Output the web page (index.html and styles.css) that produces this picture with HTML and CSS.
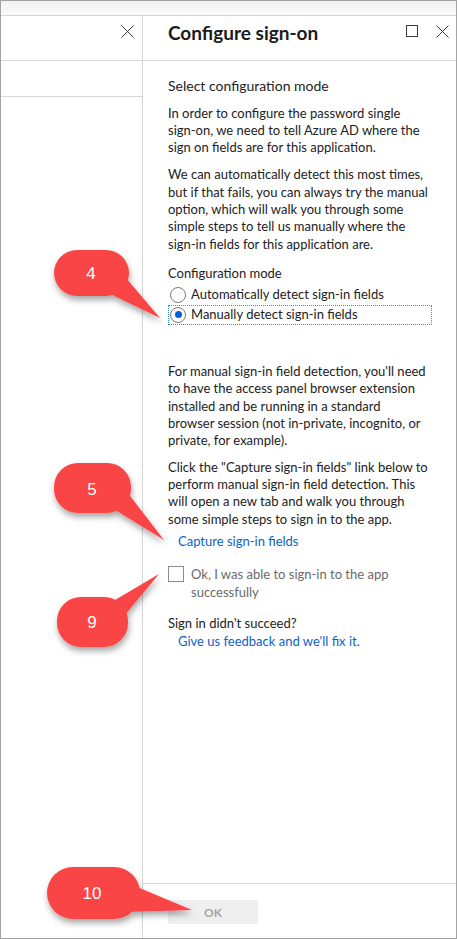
FILE: index.html
```html
<!DOCTYPE html>
<html lang="en">
<head>
<meta charset="utf-8">
<title>Configure sign-on</title>
<link rel="stylesheet" href="styles.css">
</head>
<body>
<div class="frame">
  <div class="topstrip"></div>
  <div class="panes">
    <div class="left">
      <div class="left-head">
        <svg class="icon-x" width="13" height="13" viewBox="0 0 13 13"><path d="M0.5 0.5 L12.5 12.5 M12.5 0.5 L0.5 12.5" /></svg>
      </div>
      <div class="left-row"></div>
    </div>
    <div class="right">
      <div class="blade-head">
        <h1 class="title">Configure sign-on</h1>
        <div class="head-actions">
          <svg class="icon-max" width="12" height="12" viewBox="0 0 12 12"><rect x="0.5" y="0.5" width="11" height="11" /></svg>
          <svg class="icon-x" width="13" height="13" viewBox="0 0 13 13"><path d="M0.5 0.5 L12.5 12.5 M12.5 0.5 L0.5 12.5" /></svg>
        </div>
      </div>
      <div class="blade-body">
        <h2 class="section-title">Select configuration mode</h2>
        <p class="para p1">In order to configure the password single sign-on, we need to tell Azure AD where the sign on fields are for this application.</p>
        <p class="para p2">We can automatically detect this most times, but if that fails, you can always try the manual option, which will walk you through some simple steps to tell us manually where the sign-in fields for this application are.</p>
        <div class="field-label">Configuration mode</div>
        <div class="radio-group">
          <label class="radio"><span class="radio-circle"></span><span>Automatically detect sign-in fields</span></label>
          <label class="radio focused"><span class="radio-circle checked"></span><span>Manually detect sign-in fields</span></label>
        </div>
        <p class="para p3">For manual sign-in field detection, you'll need to have the access panel browser extension installed and be running in a standard browser session (not in-private, incognito, or private, for example).</p>
        <p class="para p4">Click the "Capture sign-in fields" link below to perform manual sign-in field detection. This will open a new tab and walk you through some simple steps to sign in to the app.</p>
        <a class="link capture" href="#">Capture sign-in fields</a>
        <div class="check">
          <span class="check-box"></span>
          <span class="check-text">Ok, I was able to sign-in to the app successfully</span>
        </div>
        <div class="para signin">Sign in didn't succeed?</div>
        <a class="link feedback" href="#">Give us feedback and we'll fix it.</a>
      </div>
      <div class="blade-foot">
        <button class="ok" type="button">OK</button>
      </div>
    </div>
  </div>

  <svg class="callouts" width="457" height="939" viewBox="0 0 457 939">
    <defs>
      <filter id="shadow" x="-30%" y="-30%" width="170%" height="180%">
        <feDropShadow dx="1" dy="4" stdDeviation="3" flood-color="#000" flood-opacity="0.35"/>
      </filter>
    </defs>
    <g class="bubble" filter="url(#shadow)">
      <rect x="54" y="250" width="75" height="46" rx="23" ry="23"/>
      <polygon points="106,292 126,278 160,318"/>
    </g>
    <text class="bubble-num" x="91" y="273">4</text>

    <g class="bubble" filter="url(#shadow)">
      <rect x="54" y="463" width="77" height="50" rx="24" ry="24"/>
      <polygon points="112,508 127,492 164,540"/>
    </g>
    <text class="bubble-num" x="92" y="489">5</text>

    <g class="bubble" filter="url(#shadow)">
      <rect x="57" y="597" width="71" height="50" rx="24" ry="24"/>
      <polygon points="110,603 124,616 159,574"/>
    </g>
    <text class="bubble-num" x="92" y="622">9</text>

    <g class="bubble" filter="url(#shadow)">
      <rect x="47" y="867" width="93" height="52" rx="26" ry="26"/>
      <polygon points="130,884 126,912 192,910"/>
    </g>
    <text class="bubble-num" x="92" y="893">10</text>
  </svg>
</div>
</body>
</html>
```

FILE: styles.css
```css
* {
  box-sizing: border-box;
}

html,
body {
  margin: 0;
  padding: 0;
  background: #ffffff;
}

body {
  font-family: Lato, "Noto Sans", sans-serif;
  font-size: 13px;
  color: #222222;
}

.frame {
  position: relative;
  width: 457px;
  height: 939px;
  border: 1px solid #a3a3a3;
  display: flex;
  flex-direction: column;
  overflow: hidden;
}

.topstrip {
  flex: none;
  height: 15px;
  background: linear-gradient(#f1f1f1, #fbfbfb);
  border-bottom: 1px solid #d6d6d6;
}

.panes {
  flex: 1;
  display: flex;
  min-height: 0;
}

.left {
  flex: none;
  width: 142px;
  border-right: 1px solid #d6d6d6;
}

.left-head {
  height: 45px;
  border-bottom: 1px solid #d6d6d6;
  display: flex;
  justify-content: flex-end;
  align-items: flex-start;
  padding: 9px 8px 0 0;
}

.left-row {
  height: 36px;
  border-bottom: 1px solid #d6d6d6;
}

.icon-x path,
.icon-max rect {
  fill: none;
  stroke: #3a3a3a;
  stroke-width: 1;
}

.right {
  flex: 1;
  display: flex;
  flex-direction: column;
  min-width: 0;
}

.blade-head {
  flex: none;
  height: 45px;
  border-bottom: 1px solid #d6d6d6;
  display: flex;
  align-items: flex-start;
  padding: 0 7px 0 25px;
}

.title {
  margin: 0;
  padding-top: 5px;
  font-size: 19px;
  line-height: 24px;
  font-weight: 700;
  color: #1b1b1b;
}

.head-actions {
  margin-left: auto;
  display: flex;
  align-items: flex-start;
  gap: 18px;
  padding-top: 9px;
}

.blade-body {
  flex: 1;
  padding: 16px 24px 0 25px;
  line-height: 17.33px;
}

.section-title {
  margin: 0;
  font-size: 14px;
  font-weight: 400;
  line-height: 18px;
}

.para {
  margin: 0;
  max-width: 262px;
}

.p1 {
  margin-top: 9.5px;
}

.p2 {
  margin-top: 9.8px;
}

.field-label {
  margin-top: 11.6px;
}

.radio-group {
  margin-top: 3px;
  display: flex;
  flex-direction: column;
}

.radio {
  height: 20px;
  display: flex;
  align-items: center;
  gap: 5px;
  border: 1px dotted transparent;
  padding-left: 1px;
}

.radio.focused {
  border-color: #2f95d9;
}

.radio-circle {
  flex: none;
  width: 16px;
  height: 16px;
  border: 1px solid #7a7a7a;
  border-radius: 50%;
  display: flex;
  align-items: center;
  justify-content: center;
}

.radio-circle.checked::after {
  content: "";
  width: 7px;
  height: 7px;
  border-radius: 50%;
  background: #0a5fd6;
}

.p3 {
  margin-top: 38px;
  max-width: 260px;
}

.p4 {
  margin-top: 9.3px;
}

.link {
  display: block;
  margin-left: 10px;
  color: #0b63c5;
  text-decoration: none;
}

.capture {
  margin-top: 4.7px;
}

.check {
  margin-top: 15px;
  display: flex;
  align-items: flex-start;
  gap: 7px;
  line-height: 18px;
}

.check-box {
  flex: none;
  width: 16px;
  height: 16px;
  margin-top: 1px;
  border: 1px solid #8c8c8c;
}

.check-text {
  color: #6a6a6a;
}

.signin {
  margin-top: 14.3px;
}

.blade-foot {
  flex: none;
  height: 55px;
  border-top: 1px solid #d6d6d6;
  padding: 16px 0 0 25px;
}

.ok {
  display: block;
  width: 90px;
  height: 24px;
  border: 0;
  padding: 0;
  background: #efefef;
  color: #a3a3a3;
  font-family: Lato, "Noto Sans", sans-serif;
  font-size: 12px;
  font-weight: 700;
}

.callouts {
  position: absolute;
  left: -1px;
  top: -1px;
  pointer-events: none;
}

.bubble {
  fill: #f94545;
}

.bubble-num {
  fill: #ffffff;
  font-family: "Liberation Sans", Arial, sans-serif;
  font-size: 17px;
  text-anchor: middle;
  dominant-baseline: central;
}
```
